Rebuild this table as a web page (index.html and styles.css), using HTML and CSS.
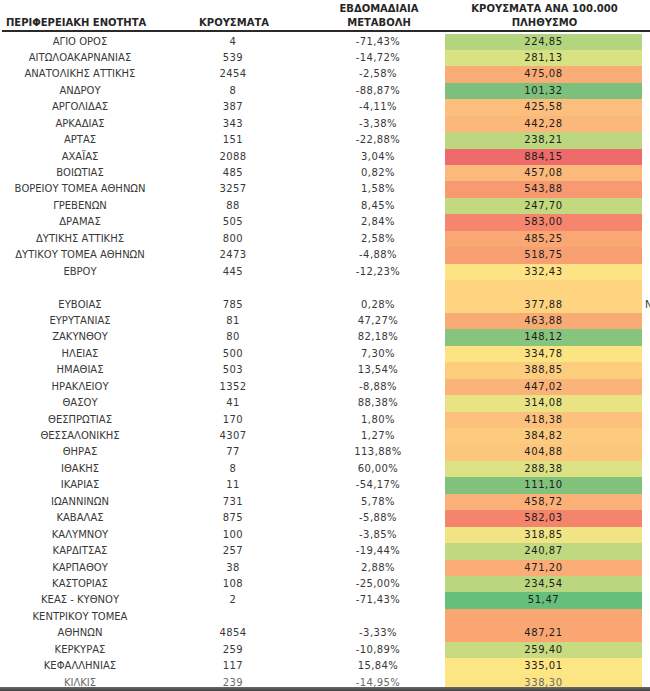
FILE: index.html
```html
<!DOCTYPE html>
<html lang="el">
<head>
<meta charset="utf-8">
<title>Κρούσματα ανά περιφερειακή ενότητα</title>
<link rel="stylesheet" href="styles.css">
</head>
<body>
<div class="sheet">
  <div class="head">
    <div class="hc h-left">ΠΕΡΙΦΕΡΕΙΑΚΗ ΕΝΟΤΗΤΑ</div>
    <div class="hc">ΚΡΟΥΣΜΑΤΑ</div>
    <div class="hc c3">ΕΒΔΟΜΑΔΙΑΙΑ<br>ΜΕΤΑΒΟΛΗ</div>
    <div class="hc">ΚΡΟΥΣΜΑΤΑ ΑΝΑ 100.000<br>ΠΛΗΘΥΣΜΟ</div>
    <div class="hc"></div>
  </div>
  <div class="body">
    <div class="row"><div class="c">ΑΓΙΟ ΟΡΟΣ</div><div class="c n">4</div><div class="c n c3">-71,43%</div><div class="c v" style="background:#b3d57f">224,85</div><div class="c"></div></div>
    <div class="row"><div class="c">ΑΙΤΩΛΟΑΚΑΡΝΑΝΙΑΣ</div><div class="c n">539</div><div class="c n c3">-14,72%</div><div class="c v" style="background:#d8e283">281,13</div><div class="c"></div></div>
    <div class="row"><div class="c">ΑΝΑΤΟΛΙΚΗΣ ΑΤΤΙΚΗΣ</div><div class="c n">2454</div><div class="c n c3">-2,58%</div><div class="c v" style="background:#f9ac76">475,08</div><div class="c"></div></div>
    <div class="row"><div class="c">ΑΝΔΡΟΥ</div><div class="c n">8</div><div class="c n c3">-88,87%</div><div class="c v" style="background:#7cc07c">101,32</div><div class="c"></div></div>
    <div class="row"><div class="c">ΑΡΓΟΛΙΔΑΣ</div><div class="c n">387</div><div class="c n c3">-4,11%</div><div class="c v" style="background:#fbbe7c">425,58</div><div class="c"></div></div>
    <div class="row"><div class="c">ΑΡΚΑΔΙΑΣ</div><div class="c n">343</div><div class="c n c3">-3,38%</div><div class="c v" style="background:#fbb87a">442,28</div><div class="c"></div></div>
    <div class="row"><div class="c">ΑΡΤΑΣ</div><div class="c n">151</div><div class="c n c3">-22,88%</div><div class="c v" style="background:#bcd780">238,21</div><div class="c"></div></div>
    <div class="row"><div class="c">ΑΧΑΪΑΣ</div><div class="c n">2088</div><div class="c n c3">3,04%</div><div class="c v" style="background:#ef6b6b">884,15</div><div class="c"></div></div>
    <div class="row"><div class="c">ΒΟΙΩΤΙΑΣ</div><div class="c n">485</div><div class="c n c3">0,82%</div><div class="c v" style="background:#fbb97b">457,08</div><div class="c"></div></div>
    <div class="row"><div class="c">ΒΟΡΕΙΟΥ ΤΟΜΕΑ ΑΘΗΝΩΝ</div><div class="c n">3257</div><div class="c n c3">1,58%</div><div class="c v" style="background:#f89a71">543,88</div><div class="c"></div></div>
    <div class="row"><div class="c">ΓΡΕΒΕΝΩΝ</div><div class="c n">88</div><div class="c n c3">8,45%</div><div class="c v" style="background:#c2d980">247,70</div><div class="c"></div></div>
    <div class="row"><div class="c">ΔΡΑΜΑΣ</div><div class="c n">505</div><div class="c n c3">2,84%</div><div class="c v" style="background:#f5866d">583,00</div><div class="c"></div></div>
    <div class="row"><div class="c">ΔΥΤΙΚΗΣ ΑΤΤΙΚΗΣ</div><div class="c n">800</div><div class="c n c3">2,58%</div><div class="c v" style="background:#f9a873">485,25</div><div class="c"></div></div>
    <div class="row"><div class="c">ΔΥΤΙΚΟΥ ΤΟΜΕΑ ΑΘΗΝΩΝ</div><div class="c n">2473</div><div class="c n c3">-4,88%</div><div class="c v" style="background:#f89f71">518,75</div><div class="c"></div></div>
    <div class="row"><div class="c">ΕΒΡΟΥ</div><div class="c n">445</div><div class="c n c3">-12,23%</div><div class="c v" style="background:#fde383">332,43</div><div class="c"></div></div>
    <div class="row tall"><div class="c">ΕΥΒΟΙΑΣ</div><div class="c n">785</div><div class="c n c3">0,28%</div><div class="c v" style="background:#fed480">377,88</div><div class="c stray">N</div></div>
    <div class="row"><div class="c">ΕΥΡΥΤΑΝΙΑΣ</div><div class="c n">81</div><div class="c n c3">47,27%</div><div class="c v" style="background:#f9ab75">463,88</div><div class="c"></div></div>
    <div class="row"><div class="c">ΖΑΚΥΝΘΟΥ</div><div class="c n">80</div><div class="c n c3">82,18%</div><div class="c v" style="background:#87c47d">148,12</div><div class="c"></div></div>
    <div class="row"><div class="c">ΗΛΕΙΑΣ</div><div class="c n">500</div><div class="c n c3">7,30%</div><div class="c v" style="background:#fde482">334,78</div><div class="c"></div></div>
    <div class="row"><div class="c">ΗΜΑΘΙΑΣ</div><div class="c n">503</div><div class="c n c3">13,54%</div><div class="c v" style="background:#fdcd7e">388,85</div><div class="c"></div></div>
    <div class="row"><div class="c">ΗΡΑΚΛΕΙΟΥ</div><div class="c n">1352</div><div class="c n c3">-8,88%</div><div class="c v" style="background:#fab379">447,02</div><div class="c"></div></div>
    <div class="row"><div class="c">ΘΑΣΟΥ</div><div class="c n">41</div><div class="c n c3">88,38%</div><div class="c v" style="background:#e9e383">314,08</div><div class="c"></div></div>
    <div class="row"><div class="c">ΘΕΣΠΡΩΤΙΑΣ</div><div class="c n">170</div><div class="c n c3">1,80%</div><div class="c v" style="background:#fcc27d">418,38</div><div class="c"></div></div>
    <div class="row"><div class="c">ΘΕΣΣΑΛΟΝΙΚΗΣ</div><div class="c n">4307</div><div class="c n c3">1,27%</div><div class="c v" style="background:#fdcb7e">384,82</div><div class="c"></div></div>
    <div class="row"><div class="c">ΘΗΡΑΣ</div><div class="c n">77</div><div class="c n c3">113,88%</div><div class="c v" style="background:#fcc67d">404,88</div><div class="c"></div></div>
    <div class="row"><div class="c">ΙΘΑΚΗΣ</div><div class="c n">8</div><div class="c n c3">60,00%</div><div class="c v" style="background:#dce183">288,38</div><div class="c"></div></div>
    <div class="row"><div class="c">ΙΚΑΡΙΑΣ</div><div class="c n">11</div><div class="c n c3">-54,17%</div><div class="c v" style="background:#80c17c">111,10</div><div class="c"></div></div>
    <div class="row"><div class="c">ΙΩΑΝΝΙΝΩΝ</div><div class="c n">731</div><div class="c n c3">5,78%</div><div class="c v" style="background:#fab077">458,72</div><div class="c"></div></div>
    <div class="row"><div class="c">ΚΑΒΑΛΑΣ</div><div class="c n">875</div><div class="c n c3">-5,88%</div><div class="c v" style="background:#f5846d">582,03</div><div class="c"></div></div>
    <div class="row"><div class="c">ΚΑΛΥΜΝΟΥ</div><div class="c n">100</div><div class="c n c3">-3,85%</div><div class="c v" style="background:#f0e484">318,85</div><div class="c"></div></div>
    <div class="row"><div class="c">ΚΑΡΔΙΤΣΑΣ</div><div class="c n">257</div><div class="c n c3">-19,44%</div><div class="c v" style="background:#c0d880">240,87</div><div class="c"></div></div>
    <div class="row"><div class="c">ΚΑΡΠΑΘΟΥ</div><div class="c n">38</div><div class="c n c3">2,88%</div><div class="c v" style="background:#faad76">471,20</div><div class="c"></div></div>
    <div class="row"><div class="c">ΚΑΣΤΟΡΙΑΣ</div><div class="c n">108</div><div class="c n c3">-25,00%</div><div class="c v" style="background:#bad780">234,54</div><div class="c"></div></div>
    <div class="row"><div class="c">ΚΕΑΣ - ΚΥΘΝΟΥ</div><div class="c n">2</div><div class="c n c3">-71,43%</div><div class="c v" style="background:#66bf7b">51,47</div><div class="c"></div></div>
    <div class="row tall"><div class="c">ΚΕΝΤΡΙΚΟΥ ΤΟΜΕΑ<br>ΑΘΗΝΩΝ</div><div class="c n">4854</div><div class="c n c3">-3,33%</div><div class="c v" style="background:#f9a673">487,21</div><div class="c"></div></div>
    <div class="row"><div class="c">ΚΕΡΚΥΡΑΣ</div><div class="c n">259</div><div class="c n c3">-10,89%</div><div class="c v" style="background:#c8db81">259,40</div><div class="c"></div></div>
    <div class="row"><div class="c">ΚΕΦΑΛΛΗΝΙΑΣ</div><div class="c n">117</div><div class="c n c3">15,84%</div><div class="c v" style="background:#fde683">335,01</div><div class="c"></div></div>
    <div class="row last"><div class="c">ΚΙΛΚΙΣ</div><div class="c n">239</div><div class="c n c3">-14,95%</div><div class="c v" style="background:#fee583">338,30</div><div class="c"></div></div>
  </div>
</div>
<div class="bottom-bar"></div>
</body>
</html>
```
FILE: styles.css
```css
html, body {
  margin: 0;
  padding: 0;
  background: #ffffff;
}
body {
  width: 650px;
  height: 691px;
  overflow: hidden;
  position: relative;
  font-family: "DejaVu Sans", Verdana, sans-serif;
  font-size: 10px;
  color: #383838;
}
.sheet {
  width: 700px;
}
.head,
.row {
  display: grid;
  grid-template-columns: 160px 146px 139px 197px 58px;
}
.head {
  height: 30px;
  margin-left: 2px;
  border-bottom: 2px solid #2a2a2a;
  margin-right: -2px;
}
.hc {
  align-self: end;
  text-align: center;
  font-weight: bold;
  font-size: 10px;
  line-height: 13.3px;
  padding-bottom: 1px;
  color: #262626;
  margin-left: -2px;
}
.hc.h-left {
  text-align: left;
  padding-left: 6px;
}
.c3 {
  padding-left: 5px;
}
.body {
  padding-top: 1.5px;
}
.row {
  height: 16.45px;
}
.row.tall {
  height: 32.9px;
}
.c {
  text-align: center;
  line-height: 16.45px;
  white-space: nowrap;
  align-self: end;
}
.row .c.v {
  align-self: stretch;
  display: flex;
  align-items: flex-end;
  justify-content: center;
  color: #1c1c1c;
  letter-spacing: 0.6px;
}
.n {
  letter-spacing: 0.4px;
}
.stray {
  text-align: left;
  padding-left: 3px;
}
.row.last .c {
  color: #6a6a6a;
}
.bottom-bar {
  position: absolute;
  left: 0;
  top: 687px;
  width: 650px;
  height: 4px;
  background: linear-gradient(#6a6a6a, #404040);
}
```
